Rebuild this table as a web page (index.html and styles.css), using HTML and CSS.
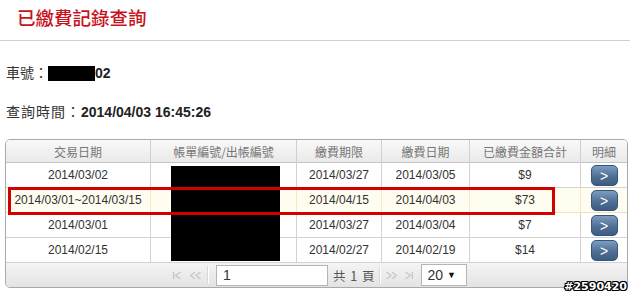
FILE: index.html
```html
<!DOCTYPE html>
<html lang="zh-Hant">
<head>
<meta charset="utf-8">
<link rel="stylesheet" href="styles.css">
</head>
<body>
<div class="page">
  <h1 class="title">已繳費記錄查詢</h1>
  <div class="info first"><span class="lbl">車號：</span><span class="mask"></span><b>02</b></div>
  <div class="info"><span class="lbl">查詢時間：</span><b>2014/04/03 16:45:26</b></div>

  <div class="grid">
    <div class="row head">
      <div class="cell">交易日期</div>
      <div class="cell">帳單編號/出帳編號</div>
      <div class="cell">繳費期限</div>
      <div class="cell">繳費日期</div>
      <div class="cell">已繳費金額合計</div>
      <div class="cell">明細</div>
    </div>
    <div class="row">
      <div class="cell">2014/03/02</div>
      <div class="cell"></div>
      <div class="cell">2014/03/27</div>
      <div class="cell">2014/03/05</div>
      <div class="cell">$9</div>
      <div class="cell"><span class="btn">&gt;</span></div>
    </div>
    <div class="row hl">
      <div class="cell">2014/03/01~2014/03/15</div>
      <div class="cell"></div>
      <div class="cell">2014/04/15</div>
      <div class="cell">2014/04/03</div>
      <div class="cell">$73</div>
      <div class="cell"><span class="btn">&gt;</span></div>
    </div>
    <div class="row">
      <div class="cell">2014/03/01</div>
      <div class="cell"></div>
      <div class="cell">2014/03/27</div>
      <div class="cell">2014/03/04</div>
      <div class="cell">$7</div>
      <div class="cell"><span class="btn">&gt;</span></div>
    </div>
    <div class="row">
      <div class="cell">2014/02/15</div>
      <div class="cell"></div>
      <div class="cell">2014/02/27</div>
      <div class="cell">2014/02/19</div>
      <div class="cell">$14</div>
      <div class="cell"><span class="btn">&gt;</span></div>
    </div>
    <div class="pager">
      <svg class="pico p1" width="8" height="7" viewBox="0 0 8 7"><rect x="0" y="0" width="1.2" height="7" fill="#c4c4c4"/><path d="M7.5 0 L2.5 3.5 L7.5 7" fill="none" stroke="#c4c4c4" stroke-width="1.2"/></svg>
      <svg class="pico p2" width="11" height="7" viewBox="0 0 11 7"><path d="M5 0 L0.5 3.5 L5 7 M10.5 0 L6 3.5 L10.5 7" fill="none" stroke="#c4c4c4" stroke-width="1.2"/></svg>
      <span class="sep s1"></span>
      <span class="pinput">1</span>
      <span class="ptext">共 1 頁</span>
      <span class="sep s2"></span>
      <svg class="pico p3" width="11" height="7" viewBox="0 0 11 7"><path d="M0.5 0 L5 3.5 L0.5 7 M6 0 L10.5 3.5 L6 7" fill="none" stroke="#c4c4c4" stroke-width="1.2"/></svg>
      <svg class="pico p4" width="8" height="7" viewBox="0 0 8 7"><path d="M0.5 0 L5.5 3.5 L0.5 7" fill="none" stroke="#c4c4c4" stroke-width="1.2"/><rect x="6.8" y="0" width="1.2" height="7" fill="#c4c4c4"/></svg>
      <span class="psel">20 <span class="arrow">▼</span></span>
    </div>
    <div class="redact"></div>
    <div class="mark"></div>
  </div>
  <div class="wm">#2590420</div>
</div>
</body>
</html>
```
FILE: styles.css
```css
* { box-sizing: border-box; }
html, body { margin: 0; padding: 0; background: #fff; }
body {
  width: 630px;
  height: 295px;
  overflow: hidden;
  font-family: "Liberation Sans", Arial, "Noto Sans CJK TC", sans-serif;
  color: #333;
}
.page { position: relative; width: 630px; height: 295px; }

.title {
  margin: 0;
  height: 41px;
  padding: 5px 0 0 17px;
  border-bottom: 1px solid #cfcfcf;
  font-family: "Noto Sans CJK TC", sans-serif;
  font-weight: 500;
  font-size: 18.5px;
  line-height: 24px;
  color: #c8121e;
}

.info {
  height: 20px;
  margin: 19px 0 0 6px;
  font-family: "Liberation Sans", Arial, "Noto Sans CJK TC", sans-serif;
  font-size: 14px;
  line-height: 20px;
  color: #222;
  display: flex;
  align-items: center;
}
.info.first { margin-top: 22px; }
.info .lbl { letter-spacing: 1px; color: #333; }
.info.first .lbl { letter-spacing: 0; }
.info b { font-weight: bold; }
.mask {
  display: inline-block;
  width: 47px;
  height: 15px;
  background: #000;
}

.grid {
  position: relative;
  margin: 17px 0 0 5px;
  width: 623px;
  border: 1px solid #a9a9a9;
  border-radius: 5px;
  overflow: hidden;
  font-size: 12px;
}
.row {
  display: grid;
  grid-template-columns: 145px 146px 85px 88px 111px 46px;
  height: 25px;
}
.cell {
  border-right: 1px solid #d3d3d3;
  border-bottom: 1px solid #d3d3d3;
  display: flex;
  align-items: center;
  justify-content: center;
  white-space: nowrap;
  color: #333;
}
.cell:last-child { border-right: 0; }
.row.head { height: 23px; background: linear-gradient(#f9f9f9, #e9e9e9); }
.row.head .cell {
  color: #777;
  border-right-color: #d0d0d0;
  border-bottom-color: #c4c4c4;
  font-family: "Noto Sans CJK TC", sans-serif;
  font-size: 12px;
}
.row.hl { background: #fffdf0; }
.row.hl .cell { border-right-color: #f3ebc4; border-bottom-color: #f0e4b0; }

.btn {
  display: flex;
  align-items: center;
  justify-content: center;
  width: 27px;
  height: 21px;
  margin-top: 1px;
  border: 1px solid #35567c;
  border-radius: 5px;
  background: linear-gradient(#7c9cc0, #4f6f95 55%, #3d5c82);
  color: #fff;
  font-size: 14px;
  line-height: 1;
}

.pager {
  height: 24px;
  background: linear-gradient(#f4f4f4, #e3e3e3);
  display: flex;
  align-items: center;
  padding-left: 167px;
}
.pico { display: block; }
.p2 { margin-left: 9px; }
.sep { width: 2px; height: 18px; background: #d8d8d8; border-right: 1px solid #fff; }
.s1 { margin-left: 6px; }
.pinput {
  margin-left: 7px;
  width: 112px;
  height: 21px;
  background: #fff;
  border: 1px solid #b5b5b5;
  padding-left: 6px;
  font-size: 14px;
  line-height: 19px;
  color: #333;
}
.ptext {
  margin-left: 5px;
  font-family: "Noto Sans CJK TC", sans-serif;
  font-size: 12.5px;
  word-spacing: 2px;
  color: #555;
}
.s2 { margin-left: 4px; }
.p3 { margin-left: 5px; }
.p4 { margin-left: 8px; }
.psel {
  margin-left: 8px;
  width: 46px;
  height: 22px;
  background: #fff;
  border: 1px solid #b5b5b5;
  padding-left: 6px;
  font-size: 14px;
  line-height: 20px;
  color: #333;
}
.arrow { font-size: 9px; color: #111; vertical-align: 2px; }

.redact {
  position: absolute;
  left: 165px;
  top: 26px;
  width: 109px;
  height: 95px;
  background: #000;
}
.mark {
  position: absolute;
  left: 2px;
  top: 47px;
  width: 547px;
  height: 28px;
  border: 3px solid #d40000;
}

.wm {
  position: absolute;
  right: 3px;
  bottom: 2px;
  font-family: "DejaVu Sans", sans-serif;
  font-weight: bold;
  font-size: 11px;
  color: #fff;
  text-shadow: 1px 0 0 #000, -1px 0 0 #000, 0 1px 0 #000, 0 -1px 0 #000, 1px 1px 0 #000, -1px -1px 0 #000, 1px -1px 0 #000, -1px 1px 0 #000;
}
```
